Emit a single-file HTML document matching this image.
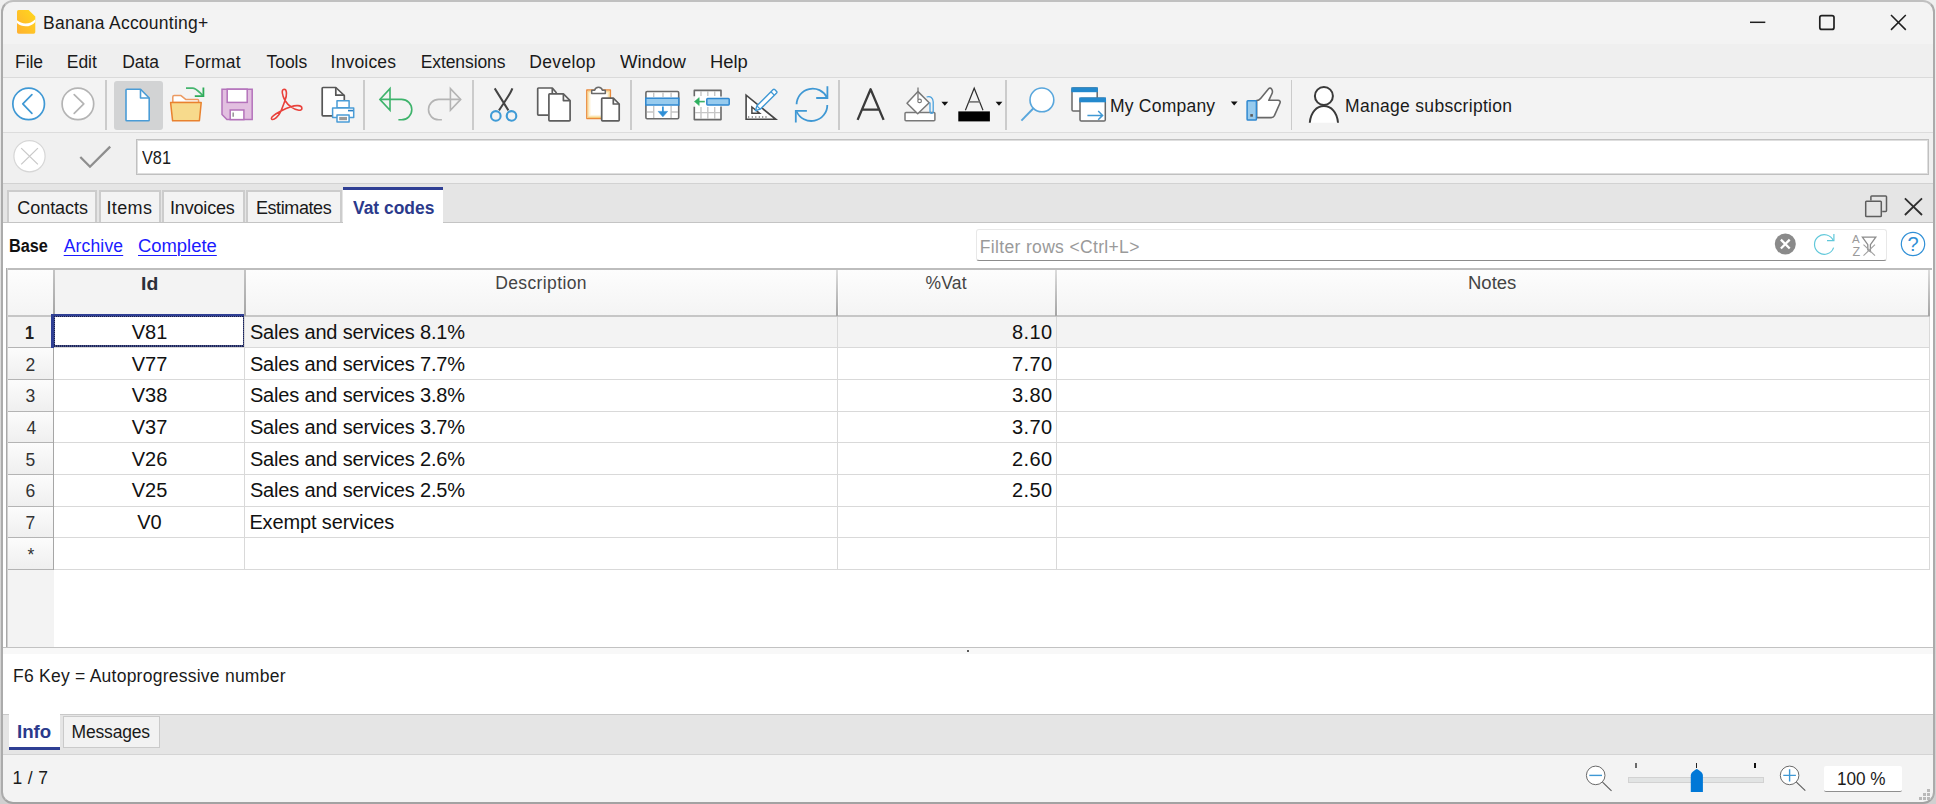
<!DOCTYPE html>
<html lang="en"><head><meta charset="utf-8"><title>Banana Accounting+</title>
<style>
html,body{margin:0;padding:0}
body{width:1936px;height:804px;overflow:hidden;position:relative;background:linear-gradient(#efefef,#d9d9d9 50%,#d0d0d0);font-family:'Liberation Sans',sans-serif}
.abs,.tx,svg.ic{position:absolute}
.tx{white-space:pre;line-height:1;font-family:'Liberation Sans',sans-serif}
#win{left:1px;top:0;width:1934px;height:804px;box-sizing:border-box;border:2px solid #ababab;border-top-color:#c0c0c0;border-bottom-color:#a2a2a2;border-radius:12px;background:#f3f3f3;overflow:hidden}
.hl{height:1px;left:3px;width:1930px}
.vsep{width:2px;top:80px;height:50px;background:#cbcbcb}
.tab{box-sizing:border-box;border:2px solid #cccccc;border-bottom:none;background:#f3f3f3;top:190px;height:32px}
.gl{background:#d9d9d9}
.rh{left:8px;width:45px;background:linear-gradient(#fcfcfc,#f0f0f0);border-bottom:1px solid #b4b4b4;box-sizing:border-box}

</style></head>
<body>
<div id="win" class="abs"></div>
<!-- bars -->
<div class="abs" style="left:3px;top:44px;width:1930px;height:33px;background:#efefef"></div>
<div class="abs hl" style="top:77px;background:#dadada"></div>
<div class="abs hl" style="top:132px;background:#dcdcdc"></div>
<div class="abs" style="left:3px;top:133px;width:1930px;height:50px;background:#f0f0f0"></div>
<div class="abs" style="left:3px;top:183px;width:1930px;height:40px;background:#e5e5e5"></div>
<div class="abs hl" style="top:183px;background:#d2d2d2"></div>
<!-- white main area -->
<div class="abs" style="left:3px;top:223px;width:1930px;height:491px;background:#fff"></div>
<div class="abs hl" style="top:222px;background:#c4c4c4"></div>
<!-- toolbar highlights/separators -->
<div class="abs" style="left:113.6px;top:80.5px;width:49.4px;height:49px;background:#d2d3d4;border-radius:3px"></div>
<div class="abs vsep" style="left:105px"></div>
<div class="abs vsep" style="left:363px"></div>
<div class="abs vsep" style="left:471.7px"></div>
<div class="abs vsep" style="left:630px"></div>
<div class="abs vsep" style="left:838px"></div>
<div class="abs vsep" style="left:1005.2px"></div>
<div class="abs vsep" style="left:1290.6px;width:1.8px"></div>
<!-- edit input -->
<div class="abs" style="left:135.7px;top:139px;width:1793.6px;height:35.8px;box-sizing:border-box;border:1px solid #c0c0c0;box-shadow:inset 0 0 0 1px #dedede;background:#fff"></div>
<!-- tabs -->
<div class="abs tab" style="left:7.4px;width:90px"></div>
<div class="abs tab" style="left:98.5px;width:62.4px"></div>
<div class="abs tab" style="left:161.8px;width:83px"></div>
<div class="abs tab" style="left:246.2px;width:95.8px"></div>
<div class="abs" style="left:343px;top:187px;width:100px;height:36px;background:#fff;border-top:3px solid #2f3f94;box-sizing:border-box"></div>
<!-- filter box -->
<div class="abs" style="left:976px;top:229px;width:911px;height:32px;box-sizing:border-box;border:1px solid #e8e8e8;border-bottom:1.5px solid #8c8c8c;border-radius:3px;background:#fff"></div>
<!-- table -->
<div class="abs" style="left:7px;top:268px;width:1925px;height:2px;background:#bdbdbd"></div>
<div class="abs" style="left:6px;top:268px;width:2px;height:379px;background:linear-gradient(90deg,#a8a8a8 50%,#cfcfcf 50%)"></div>
<div class="abs" style="left:8px;top:270px;width:1922px;height:45px;background:linear-gradient(#fdfdfd,#f4f4f4)"></div>
<div class="abs" style="left:54px;top:270px;width:190px;height:45px;background:#f3f3f3"></div>
<div class="abs" style="left:8px;top:315px;width:1922px;height:2px;background:#c6c6c6"></div>
<!-- row header column -->
<div class="abs" style="left:8px;top:317px;width:46px;height:330px;background:#f3f3f3"></div>
<!-- row 1 highlight -->
<div class="abs" style="left:54px;top:317px;width:1876px;height:30px;background:#f3f3f3"></div>
<div class="abs" style="left:8px;top:317px;width:45px;height:30px;background:#f3f3f3"></div>
<div class="abs" style="left:8px;top:347px;width:46px;height:1px;background:#b4b4b4"></div>
<div class="abs" style="left:8px;top:348px;width:45px;height:31px;background:linear-gradient(#fcfcfc,#efefef)"></div>
<div class="abs" style="left:8px;top:379px;width:46px;height:1px;background:#b4b4b4"></div>
<div class="abs" style="left:8px;top:380px;width:45px;height:31px;background:linear-gradient(#fcfcfc,#efefef)"></div>
<div class="abs" style="left:8px;top:411px;width:46px;height:1px;background:#b4b4b4"></div>
<div class="abs" style="left:8px;top:412px;width:45px;height:30px;background:linear-gradient(#fcfcfc,#efefef)"></div>
<div class="abs" style="left:8px;top:442px;width:46px;height:1px;background:#b4b4b4"></div>
<div class="abs" style="left:8px;top:443px;width:45px;height:31px;background:linear-gradient(#fcfcfc,#efefef)"></div>
<div class="abs" style="left:8px;top:474px;width:46px;height:1px;background:#b4b4b4"></div>
<div class="abs" style="left:8px;top:475px;width:45px;height:31px;background:linear-gradient(#fcfcfc,#efefef)"></div>
<div class="abs" style="left:8px;top:506px;width:46px;height:1px;background:#b4b4b4"></div>
<div class="abs" style="left:8px;top:507px;width:45px;height:30px;background:linear-gradient(#fcfcfc,#efefef)"></div>
<div class="abs" style="left:8px;top:537px;width:46px;height:1px;background:#b4b4b4"></div>
<div class="abs" style="left:8px;top:538px;width:45px;height:31px;background:linear-gradient(#fcfcfc,#efefef)"></div>
<div class="abs" style="left:8px;top:569px;width:46px;height:1px;background:#b4b4b4"></div>
<div class="abs gl" style="left:54px;top:347px;width:1876px;height:1px"></div>
<div class="abs gl" style="left:54px;top:379px;width:1876px;height:1px"></div>
<div class="abs gl" style="left:54px;top:411px;width:1876px;height:1px"></div>
<div class="abs gl" style="left:54px;top:442px;width:1876px;height:1px"></div>
<div class="abs gl" style="left:54px;top:474px;width:1876px;height:1px"></div>
<div class="abs gl" style="left:54px;top:506px;width:1876px;height:1px"></div>
<div class="abs gl" style="left:54px;top:537px;width:1876px;height:1px"></div>
<div class="abs gl" style="left:54px;top:569px;width:1876px;height:1px"></div>
<div class="abs" style="left:53.1px;top:270px;width:1.8px;height:46px;background:linear-gradient(#c4c4c4,#a4a4a4)"></div>
<div class="abs" style="left:244.1px;top:270px;width:1.8px;height:46px;background:linear-gradient(#c4c4c4,#a4a4a4)"></div>
<div class="abs" style="left:836.3px;top:270px;width:1.7px;height:46px;background:linear-gradient(#dcdcdc,#a4a4a4)"></div><div class="abs" style="left:838px;top:270px;width:1px;height:45px;background:#fff;opacity:.6"></div>
<div class="abs" style="left:1055.3px;top:270px;width:1.7px;height:46px;background:linear-gradient(#dcdcdc,#a4a4a4)"></div><div class="abs" style="left:1057px;top:270px;width:1px;height:45px;background:#fff;opacity:.6"></div>
<div class="abs" style="left:1928.3px;top:270px;width:1.7px;height:46px;background:linear-gradient(#dcdcdc,#a4a4a4)"></div><div class="abs" style="left:1930px;top:270px;width:1px;height:45px;background:#fff;opacity:.6"></div>
<div class="abs gl" style="left:244px;top:317px;width:1px;height:253px"></div>
<div class="abs gl" style="left:837px;top:317px;width:1px;height:253px"></div>
<div class="abs gl" style="left:1056px;top:317px;width:1px;height:253px"></div>
<div class="abs gl" style="left:1929px;top:317px;width:1px;height:253px"></div>
<div class="abs" style="left:53px;top:317px;width:1px;height:253px;background:#a6a6a6"></div>
<div class="abs" style="left:54px;top:316px;width:190px;height:31px;background:#fff"></div>
<div class="abs" style="left:51.4px;top:313.5px;width:192.8px;height:2.7px;background:#2f3f94"></div>
<div class="abs" style="left:51.4px;top:315px;width:2.9px;height:32.5px;background:#2f3f94"></div>
<div class="abs" style="left:54.3px;top:316.1px;width:189.7px;height:1px;background:repeating-linear-gradient(90deg,#141a4a 0 1px,#5b659a 1px 2px)"></div>
<div class="abs" style="left:54.3px;top:316.1px;width:1px;height:30.8px;background:repeating-linear-gradient(180deg,#141a4a 0 1px,#5b659a 1px 2px)"></div>
<div class="abs" style="left:54.3px;top:345.2px;width:189.7px;height:1.7px;background:repeating-linear-gradient(90deg,#1d2456 0 1px,#4a5488 1px 2px)"></div>
<div class="abs" style="left:242.5px;top:316.1px;width:1.5px;height:30.8px;background:repeating-linear-gradient(180deg,#1d2456 0 1px,#4a5488 1px 2px)"></div>
<div class="abs hl" style="top:647px;background:#c2c2c2"></div>
<div class="abs" style="left:3px;top:648px;width:1930px;height:6px;background:#f8f8f8"></div>
<div class="abs" style="left:967px;top:650px;width:2px;height:2px;background:#5a5a5a"></div>
<div class="abs" style="left:3px;top:714px;width:1930px;height:41px;background:#e5e5e5"></div>
<div class="abs hl" style="top:714px;background:#c9c9c9"></div>
<div class="abs hl" style="top:754px;background:#d4d4d4"></div>
<div class="abs" style="left:8.7px;top:714px;width:51.5px;height:36px;background:#fff;border-bottom:3px solid #2f3f94;box-sizing:border-box"></div>
<div class="abs" style="left:62.6px;top:716px;width:97.2px;height:31.6px;background:#f2f2f2;border:1.5px solid #cacaca;box-sizing:border-box"></div>
<div class="abs" style="left:1824px;top:766px;width:78px;height:25.6px;background:#fff;border-bottom:1px solid #8f8f8f;border-radius:2px;box-sizing:border-box"></div>
<div class="abs" style="left:1628px;top:777px;width:136px;height:6px;background:#e2e4e4;border:1px solid #d2d2d2;box-sizing:border-box"></div>
<div class="abs" style="left:1635px;top:763px;width:2px;height:5px;background:#6a6a6a"></div>
<div class="abs" style="left:1695.6px;top:763px;width:1.5px;height:5px;background:#222"></div>
<div class="abs" style="left:1754px;top:762.6px;width:2.2px;height:5.4px;background:#111"></div>

<svg class="abs" style="left:0;top:0" width="1936" height="804" viewBox="0 0 1936 804" fill="none" stroke-linecap="butt" stroke-linejoin="miter">
<defs>
<linearGradient id="lg" x1="0" y1="1" x2="1" y2="0"><stop offset="0" stop-color="#ffb030"/><stop offset="1" stop-color="#ffd81c"/></linearGradient>
<linearGradient id="clipg" x1="0" y1="0" x2="1" y2="0"><stop offset="0" stop-color="#f6c56a"/><stop offset="0.18" stop-color="#fff"/><stop offset="0.82" stop-color="#fff"/><stop offset="1" stop-color="#f6c56a"/></linearGradient>
</defs>
<!-- app logo -->
<g id="logo">
<path d="M18.6,10 H28.6 L35.3,16.4 V32 a1.7,1.7 0 0 1 -1.7,1.7 H18.7 a1.7,1.7 0 0 1 -1.7,-1.7 V11.6 a1.6,1.6 0 0 1 1.6,-1.6 Z" fill="url(#lg)"/>
<path d="M17,20.3 C22,24.7 30.5,24.5 35.3,19.2 V21.9 C30.5,27.6 22,27.6 17,23 Z" fill="#fff"/>
</g>
<!-- window controls -->
<g stroke="#1f1f1f" stroke-width="1.5">
<path d="M1750,22.3 H1765.3"/>
<rect x="1819.8" y="15.6" width="14.2" height="13.8" rx="2" stroke-width="1.7"/>
<path d="M1891,15 L1905.8,29.9 M1905.8,15 L1891,29.9"/>
</g>
<!-- back / forward -->
<g stroke-width="1.7" stroke-linecap="round" stroke-linejoin="round">
<circle cx="28.65" cy="103.9" r="15.8" fill="#fff" stroke="#3f98d4"/>
<path d="M31.9,94.6 L22.8,103.9 L31.9,113.3" stroke="#3f98d4"/>
<circle cx="77.9" cy="103.9" r="15.8" fill="#fff" stroke="#b4b4b4"/>
<path d="M74.2,94.6 L83.8,103.9 L74.2,113.3" stroke="#b4b4b4"/>
</g>
<!-- new document -->
<g stroke="#4a9cd6" stroke-width="1.6" stroke-linejoin="round">
<path d="M126.8,89.2 H140.5 L149.2,98 V119.9 a0.8,0.8 0 0 1 -0.8,0.8 H126.8 a0.8,0.8 0 0 1 -0.8,-0.8 V90 a0.8,0.8 0 0 1 0.8,-0.8 Z" fill="#fff"/>
<path d="M140.5,89.2 V98 H149.2"/>
</g>
<!-- open folder -->
<g stroke-linejoin="round">
<path d="M172.8,102.5 V97 a1.4,1.4 0 0 1 1.4,-1.4 H181 L186,99.6 H197.6 a1,1 0 0 1 1,1 V102.5 Z" fill="#fff" stroke="#ec9a62" stroke-width="1.5"/>
<path d="M170.6,102.6 H201.2 L199.4,120.8 H172.6 Z" fill="#f7da8c" stroke="#e9822f" stroke-width="1.5"/>
<path d="M186,88.1 H192.5 C196,88.1 197.5,90.5 202.6,95.4" stroke="#45b56e" stroke-width="1.8"/>
<path d="M203.4,87.6 V96.2 H194.8" stroke="#2dab58" stroke-width="1.8" stroke-linejoin="miter"/>
</g>
<!-- save -->
<g stroke="#b473bb" stroke-width="1.5" stroke-linejoin="miter">
<path d="M222,89.2 H252.2 V119.6 H226.9 L222,114.5 Z" fill="#e2bfe0"/>
<rect x="227.2" y="89.2" width="20" height="13.2" fill="#fff"/>
<rect x="230.2" y="110" width="13.7" height="9.6" fill="#fff"/>
<path d="M233.2,112.6 V116.8" stroke="#9a9a9a" stroke-width="1.6"/>
</g>
<!-- pdf -->
<path d="M285,100.5 C287,95.5 287.2,89.3 284.1,89.3 C281,89.3 282.2,95.5 285,100.5 C287,103.6 289,105.6 291,106.8 C295,109.6 301.9,111.9 301.9,108.4 C301.9,104.8 295,105.2 291,106.8 C287,108 284,109.4 281,111 C276,113.6 270,117.2 271.7,119.1 C273.6,121 279,116 281,111 C283,106 284,103.5 285,100.5 Z" stroke="#e9413b" stroke-width="1.6" stroke-linejoin="round"/>
<!-- print preview -->
<g stroke-linejoin="round">
<path d="M344.3,100 V95.5 L335.8,87.5 H323 a0.8,0.8 0 0 0 -0.8,0.8 V115.1 a0.8,0.8 0 0 0 0.8,0.8 H332" fill="#fff" stroke="#565656" stroke-width="1.7"/>
<path d="M335.8,87.5 V95.2 H344.3" stroke="#565656" stroke-width="1.7"/>
<rect x="337" y="100.7" width="12.1" height="7" fill="#fff" stroke="#4a9cd6" stroke-width="1.5"/>
<rect x="332.6" y="108.1" width="21.1" height="9.3" fill="#fff" stroke="#4a9cd6" stroke-width="1.5"/>
<rect x="337" y="114.9" width="12.1" height="7.2" fill="#fff" stroke="#4a9cd6" stroke-width="1.5"/>
<rect x="339.2" y="116.9" width="7.8" height="3.3" fill="#9a9a9a" stroke="none"/>
<path d="M348,110.6 H353" stroke="#2a80c6" stroke-width="1.6"/>
</g>
<!-- undo -->
<g stroke="#3db36b" stroke-width="1.6" stroke-linejoin="miter">
<path d="M390,88.6 L379.9,99.4 L390,110.2 Z"/>
<path d="M379.9,99.4 H401.6 A10.2,10.2 0 0 1 401.6,119.8 H398.4"/>
</g>
<!-- redo -->
<g stroke="#b4b4b4" stroke-width="1.6" stroke-linejoin="miter">
<path d="M450.4,88.6 L460.7,99.4 L450.4,110.2 Z"/>
<path d="M460.7,99.4 H438.7 A10.2,10.2 0 0 0 438.7,119.8 H441.9"/>
</g>
<!-- cut -->
<g>
<path d="M494.7,88.4 L508.4,110.4 M512.4,88.4 C511,93 505,101 499,110.4" stroke="#444" stroke-width="2"/>
<circle cx="495.8" cy="115.9" r="4.8" stroke="#3f9bd6" stroke-width="2.1"/>
<circle cx="511.5" cy="115.9" r="4.8" stroke="#3f9bd6" stroke-width="2.1"/>
</g>
<!-- copy -->
<g stroke="#5e5e5e" stroke-width="1.7" stroke-linejoin="round" fill="#fff">
<path d="M556.6,93 L552.3,88 H538.5 a0.8,0.8 0 0 0 -0.8,0.8 V114.3 a0.8,0.8 0 0 0 0.8,0.8 H548"/>
<path d="M552.3,88 V93"/>
<path d="M549.7,93.9 H563.4 L570.1,100.6 V120.1 a0.8,0.8 0 0 1 -0.8,0.8 H549.7 a0.8,0.8 0 0 1 -0.8,-0.8 V94.7 a0.8,0.8 0 0 1 0.8,-0.8 Z"/>
<path d="M563.4,93.9 V100.6 H570.1" fill="none"/>
</g>
<!-- paste -->
<g stroke-linejoin="round">
<rect x="586.8" y="90" width="23.6" height="28.6" fill="#fff" stroke="#ea8a3c" stroke-width="1.4"/>
<rect x="588" y="91.2" width="21.2" height="26.2" stroke="#f6cd7c" stroke-width="1.1"/>
<rect x="589" y="92.2" width="19.2" height="24.2" stroke="#fae3ae" stroke-width="1"/>
<rect x="590" y="93.2" width="17.2" height="22.2" stroke="#fdf3dc" stroke-width="1"/>
<path d="M591.7,93.5 V90.3 H594.6 A4,4 0 0 1 602.4,90.3 H605.3 V93.5 Z" fill="#fff" stroke="#6a6a6a" stroke-width="1.5"/>
<path d="M602.5,98.2 H613.3 L619.2,104 V120.1 a0.8,0.8 0 0 1 -0.8,0.8 H602.5 a0.8,0.8 0 0 1 -0.8,-0.8 V99 a0.8,0.8 0 0 1 0.8,-0.8 Z" fill="#fff" stroke="#5e5e5e" stroke-width="1.7"/>
<path d="M613.3,98.2 V104 H619.2" stroke="#5e5e5e" stroke-width="1.7"/>
</g>
<!-- insert row -->
<g>
<rect x="645.9" y="91.5" width="32.8" height="27.2" rx="1.2" fill="#fff" stroke="#6a6a6a" stroke-width="1.6"/>
<path d="M653.7,92.5 V97 M663,92.5 V97 M671.1,92.5 V97 M653.7,106 V118 M671.1,106 V118 M647,112 H653.7 M671.1,112 H678" stroke="#c6c6c6" stroke-width="1.4"/>
<rect x="645.8" y="98.2" width="33" height="6.8" fill="#97cbee" stroke="#2f88d0" stroke-width="1.5"/>
<path d="M662.9,106.6 V112" stroke="#2f8fd6" stroke-width="1.7"/>
<path d="M658.2,111.4 H667.6 L662.9,116.8 Z" fill="#2f8fd6" stroke="#2f8fd6" stroke-width="0.6"/>
</g>
<!-- delete row -->
<g>
<rect x="695.2" y="91.3" width="25" height="27.4" fill="#fff" stroke="none"/>
<path d="M701,91.5 V96 M707.8,91.5 V96 M714.7,91.5 V96 M701,107 V118.6 M707.8,107 V118.6 M714.7,107 V118.6 M695.2,112.6 H720.2" stroke="#c6c6c6" stroke-width="1.4"/>
<path d="M694.3,96.2 V90.4 H721 V96.5 M721,106.6 V119.6 H694.3 V106.7" fill="none" stroke="#6a6a6a" stroke-width="1.6" stroke-linejoin="round"/>
<rect x="706.8" y="98.4" width="22.4" height="6.5" rx="0.8" fill="#97cbee" stroke="#2f88d0" stroke-width="1.5"/>
<path d="M698.2,101.6 H704.8" stroke="#3db36b" stroke-width="1.6"/>
<path d="M699.2,97.6 L694.4,101.6 L699.2,105.6 Z" fill="#2fb060" stroke="#2fb060" stroke-width="0.5"/>
</g>
<!-- ruler + pencil -->
<g>
<path d="M746.1,95.2 V119.3 H775.8 Z" fill="#fff" stroke="#464646" stroke-width="1.6" stroke-linejoin="miter" stroke-miterlimit="10"/>
<path d="M751.9,107 V113.2 H759.6 Z" stroke="#464646" stroke-width="1.5"/>
<path d="M748.7,116 V118 M752.3,116 V118 M755.8,116 V118 M759.3,116 V118 M762.7,116 V118 M766,116 V118" stroke="#8c8c8c" stroke-width="1.1"/>
<path d="M755.4,110.7 L756.9,105.84 L773.2,89.5 a1.1,1.1 0 0 1 1.5,0 L776.6,91.4 a1.1,1.1 0 0 1 0,1.5 L760.24,109.16 Z" fill="#fff" stroke="#3f98d4" stroke-width="1.4" stroke-linejoin="round"/>
<path d="M770.91,91.78 L774.25,95.1 M756.9,105.84 L760.24,109.16" stroke="#3f98d4" stroke-width="1.3"/>
</g>
<!-- refresh -->
<g stroke="#3f98d4" stroke-width="1.8">
<path d="M796.6,104.3 A16.05,16.05 0 0 1 827,97.5"/>
<path d="M827.4,86.2 V98 H816.2"/>
<path d="M827.3,104.9 A16.05,16.05 0 0 1 796.6,111.5"/>
<path d="M795.8,122.6 V110.8 H806.9"/>
</g>
<!-- big A -->
<path d="M857.6,119.9 L870.6,89.3 L883.6,119.9 M862.6,109.6 H878.8" stroke="#3a3a3a" stroke-width="2.3" stroke-linejoin="round"/>
<!-- fill bucket -->
<g>
<rect x="905" y="112.4" width="29.9" height="8.3" rx="1" fill="#fff" stroke="#787878" stroke-width="1.5"/>
<path d="M918,91.6 L929.2,102.8 L917.7,113.8 L907,103.2 Z" fill="#fff" stroke="#787878" stroke-width="1.5" stroke-linejoin="round"/>
<path d="M918,87.5 V99.4" stroke="#787878" stroke-width="1.3"/>
<circle cx="919.6" cy="100.9" r="1.8" stroke="#787878" stroke-width="1.2"/>
<path d="M926.6,97 C930.5,95.5 933.2,98 933.2,102 V111 C933.2,114 930,114 930,111 V102.5" stroke="#4aa0dc" stroke-width="1.3" fill="none"/>
</g>
<path d="M941.4,101.8 H948.2 L944.8,105.8 Z" fill="#111"/>
<!-- font color A -->
<g>
<path d="M965.4,110.2 L974.2,88.2 L983,110.2" stroke="#2e2e2e" stroke-width="1.2"/>
<path d="M968.4,101.9 H980" stroke="#6a6a6a" stroke-width="1.5"/>
<rect x="958.3" y="111.4" width="31.6" height="10" fill="#000"/>
</g>
<path d="M995.6,101.8 H1002.4 L999,105.8 Z" fill="#111"/>
<!-- search -->
<g stroke="#58a6dc">
<circle cx="1041.9" cy="99.9" r="11.9" fill="#fff" stroke-width="1.6"/>
<path d="M1033.2,108.5 L1021.4,120.6" stroke-width="1.9"/>
</g>
<!-- windows -->
<g>
<rect x="1072" y="88" width="25.2" height="23" rx="1.3" fill="#fff" stroke="#686868" stroke-width="1.5"/>
<rect x="1071.3" y="87.3" width="26.6" height="4.9" fill="#2489cd"/>
<rect x="1080" y="98.2" width="25.3" height="22.9" rx="1.3" fill="#fff" stroke="#686868" stroke-width="1.5"/>
<rect x="1079.3" y="97.4" width="26.7" height="4.9" fill="#2489cd"/>
<path d="M1087.4,115.4 H1102.2 M1098.2,111 L1102.6,115.4 L1098.2,119.8" stroke="#3f98d4" stroke-width="1.5"/>
</g>
<path d="M1230.8,101.4 H1237.6 L1234.2,105.6 Z" fill="#111"/>
<!-- thumb up -->
<g>
<path d="M1256.6,100.6 C1258.6,100.4 1259.6,99.6 1260.6,98.4 L1268.6,88.8 C1269.6,87.6 1271,88 1271.8,89.4 C1272.8,91.2 1272.6,92.6 1271.8,94 L1268.8,100.3 H1278 C1280,100.3 1280.6,101.6 1279.9,103.2 L1274.4,115.6 C1273.6,117.2 1272.8,117.6 1271.2,117.6 H1256.6 Z" fill="#fff" stroke="#686868" stroke-width="1.6" stroke-linejoin="round"/>
<rect x="1247.1" y="100.7" width="9.3" height="19.3" rx="0.8" fill="#97cbee" stroke="#2f88d0" stroke-width="1.5"/>
<rect x="1250.3" y="114.1" width="2.6" height="2.6" fill="#5a5a5a"/>
</g>
<!-- person -->
<g stroke="#3a3a3a" stroke-width="2">
<path d="M1309.8,122.8 C1310.6,112 1317,106.1 1323.9,106.1 C1330.8,106.1 1337.2,112 1338,122.8" fill="#fff"/>
<circle cx="1323.9" cy="96" r="9" fill="#fff"/>
</g>
<!-- cancel / accept -->
<g>
<circle cx="29.5" cy="156.2" r="15.6" fill="#fff" stroke="#d6d6d6" stroke-width="1.2"/>
<path d="M21.2,148.1 L37.9,164.4 M37.9,148.1 L21.2,164.4" stroke="#c9c9c9" stroke-width="1.3"/>
<path d="M80.3,157 L90,166.7 L110.2,146.6" stroke="#8e8e8e" stroke-width="2.3"/>
</g>
<!-- tabbar restore / close -->
<g stroke="#5e5e5e" stroke-width="1.5">
<path d="M1870.9,200.4 V196.7 a0.8,0.8 0 0 1 0.8,-0.8 H1885.7 a0.8,0.8 0 0 1 0.8,0.8 V210.6 a0.8,0.8 0 0 1 -0.8,0.8 H1882.2"/>
<rect x="1865.7" y="201.2" width="15.6" height="15.4" rx="0.8"/>
</g>
<path d="M1904.9,198.3 L1922,215 M1922,198.3 L1904.9,215" stroke="#2e2e2e" stroke-width="1.8"/>
<!-- filter icons -->
<circle cx="1785.3" cy="244" r="10.5" fill="#8a8a8a"/>
<path d="M1780.9,239.6 L1789.7,248.5 M1789.7,239.6 L1780.9,248.5" stroke="#fff" stroke-width="2.3"/>
<g stroke="#60c8da" stroke-width="1.2">
<path d="M1833.4,240.8 A9.8,9.8 0 1 0 1833.6,247.6"/>
<path d="M1833.9,234.1 V240.7 H1827"/>
</g>
<g stroke="#a0a0a0" stroke-width="1.1">
<path d="M1862.4,237.1 H1875.8 L1870.4,244.6 V251.6 L1867.8,250 V244.6 Z" stroke="#8c8c8c" stroke-width="1.3"/>
<path d="M1863.5,244.6 L1875,255.6 M1875,244.6 L1863.5,255.6"/>
</g>
<text x="1852" y="242.6" font-family="'Liberation Sans',sans-serif" font-size="11.5" fill="#9a9a9a" stroke="none">A</text>
<text x="1852.4" y="255.7" font-family="'Liberation Sans',sans-serif" font-size="12.5" fill="#9a9a9a" stroke="none">Z</text>
<circle cx="1913" cy="244" r="11.7" stroke="#2f8fd6" stroke-width="1.2" fill="#fff"/>
<text x="1913" y="251.4" text-anchor="middle" font-family="'Liberation Sans',sans-serif" font-size="20" fill="#2f8fd6" stroke="none">?</text>
<!-- zoom controls -->
<g>
<circle cx="1595.7" cy="775.4" r="9.3" fill="#fff" stroke="#6a6a6a" stroke-width="1"/>
<path d="M1589.3,775.4 H1602" stroke="#3f98d4" stroke-width="1.4"/>
<path d="M1602.5,782.2 L1611.5,790.9" stroke="#5a5a5a" stroke-width="1.1"/>
<circle cx="1789.6" cy="775.4" r="9.3" fill="#fff" stroke="#6a6a6a" stroke-width="1"/>
<path d="M1783.3,775.4 H1795.9 M1789.6,769.2 V781.6" stroke="#3f98d4" stroke-width="1.4"/>
<path d="M1796.4,782.2 L1805.3,790.7" stroke="#5a5a5a" stroke-width="1.1"/>
<path d="M1690.8,792 V775.4 C1690.8,772.6 1694,770.6 1696.8,769 C1699.6,770.6 1702.9,772.6 1702.9,775.4 V792 Z" fill="#0078d7"/>
</g>
<!-- size grip -->
<g fill="#b9b9b9">
<rect x="1927" y="789" width="3" height="3"/>
<rect x="1923" y="793" width="3" height="3"/><rect x="1927" y="793" width="3" height="3"/>
<rect x="1919" y="797" width="3" height="3"/><rect x="1923" y="797" width="3" height="3"/><rect x="1927" y="797" width="3" height="3"/>
</g>
</svg>

<!-- text -->
<span class="tx" id="title" style="left:43.00px;top:15.00px;font-size:17.5px;font-weight:400;color:#1a1a1a;letter-spacing:0.247px;">Banana Accounting+</span>
<span class="tx" id="m0" style="left:15.10px;top:54.00px;font-size:17.5px;font-weight:400;color:#1a1a1a;letter-spacing:-0.133px;">File</span>
<span class="tx" id="m1" style="left:66.80px;top:54.00px;font-size:17.5px;font-weight:400;color:#1a1a1a;letter-spacing:-0.066px;">Edit</span>
<span class="tx" id="m2" style="left:122.30px;top:54.00px;font-size:17.5px;font-weight:400;color:#1a1a1a;letter-spacing:-0.134px;">Data</span>
<span class="tx" id="m3" style="left:184.30px;top:54.00px;font-size:17.5px;font-weight:400;color:#1a1a1a;letter-spacing:0.160px;">Format</span>
<span class="tx" id="m4" style="left:266.50px;top:54.00px;font-size:17.5px;font-weight:400;color:#1a1a1a;letter-spacing:-0.050px;">Tools</span>
<span class="tx" id="m5" style="left:330.60px;top:54.00px;font-size:17.5px;font-weight:400;color:#1a1a1a;letter-spacing:0.171px;">Invoices</span>
<span class="tx" id="m6" style="left:420.70px;top:54.00px;font-size:17.5px;font-weight:400;color:#1a1a1a;letter-spacing:-0.089px;">Extensions</span>
<span class="tx" id="m7" style="left:529.20px;top:54.00px;font-size:17.5px;font-weight:400;color:#1a1a1a;letter-spacing:0.367px;">Develop</span>
<span class="tx" id="m8" style="left:620.00px;top:54.00px;font-size:17.5px;font-weight:400;color:#1a1a1a;letter-spacing:0.000px;transform:scaleX(1.0597);transform-origin:0 0;">Window</span>
<span class="tx" id="m9" style="left:710.35px;top:54.00px;font-size:17.5px;font-weight:400;color:#1a1a1a;letter-spacing:0.000px;transform:scaleX(1.0500);transform-origin:0 0;">Help</span>
<span class="tx" id="myco" style="left:1110.00px;top:98.00px;font-size:17.5px;font-weight:400;color:#1a1a1a;letter-spacing:0.222px;">My Company</span>
<span class="tx" id="msub" style="left:1345.00px;top:98.00px;font-size:17.5px;font-weight:400;color:#1a1a1a;letter-spacing:0.311px;">Manage subscription</span>
<span class="tx" id="edit" style="left:141.70px;top:148.00px;font-size:19px;font-weight:400;color:#1a1a1a;letter-spacing:0.000px;transform:scaleX(0.8576);transform-origin:0 0;">V81</span>
<span class="tx" id="tab0" style="left:17.30px;top:199.00px;font-size:18px;font-weight:400;color:#1a1a1a;letter-spacing:-0.057px;">Contacts</span>
<span class="tx" id="tab1" style="left:106.50px;top:199.00px;font-size:18px;font-weight:400;color:#1a1a1a;letter-spacing:0.350px;">Items</span>
<span class="tx" id="tab2" style="left:170.00px;top:199.00px;font-size:18px;font-weight:400;color:#1a1a1a;letter-spacing:-0.171px;">Invoices</span>
<span class="tx" id="tab3" style="left:255.90px;top:199.00px;font-size:18px;font-weight:400;color:#1a1a1a;letter-spacing:-0.400px;">Estimates</span>
<span class="tx" id="tab4" style="left:353.00px;top:199.00px;font-size:18px;font-weight:700;color:#2b3a8c;letter-spacing:0.000px;transform:scaleX(0.9687);transform-origin:0 0;">Vat codes</span>
<span class="tx" id="base" style="left:8.97px;top:238.00px;font-size:17.5px;font-weight:700;color:#111;letter-spacing:0.000px;transform:scaleX(0.9300);transform-origin:0 0;">Base</span>
<span class="tx" id="arch" style="left:63.70px;top:238.00px;font-size:17.5px;font-weight:400;color:#1a1aff;letter-spacing:0.166px;text-decoration:underline;text-decoration-thickness:1px;text-underline-offset:2.5px;">Archive</span>
<span class="tx" id="comp" style="left:137.85px;top:238.00px;font-size:17.5px;font-weight:400;color:#1a1aff;letter-spacing:0.000px;text-decoration:underline;text-decoration-thickness:1px;text-underline-offset:2.5px;transform:scaleX(1.0521);transform-origin:0 0;">Complete</span>
<span class="tx" id="filt" style="left:979.80px;top:239.00px;font-size:17.5px;font-weight:400;color:#9a9a9a;letter-spacing:0.337px;">Filter rows &lt;Ctrl+L&gt;</span>
<span class="tx" id="hid" style="left:140.69px;top:276.00px;font-size:17.5px;font-weight:700;color:#2a2f3a;letter-spacing:0.000px;transform:scaleX(1.1077);transform-origin:0 0;">Id</span>
<span class="tx" id="hdesc" style="left:495.20px;top:275.00px;font-size:17.5px;font-weight:400;color:#444;letter-spacing:0.380px;">Description</span>
<span class="tx" id="hvat" style="left:925.60px;top:275.00px;font-size:17.5px;font-weight:400;color:#444;letter-spacing:0.133px;">%Vat</span>
<span class="tx" id="hnotes" style="left:1468.44px;top:275.00px;font-size:17.5px;font-weight:400;color:#444;letter-spacing:0.000px;transform:scaleX(1.0568);transform-origin:0 0;">Notes</span>
<span class="tx" id="info" style="left:13.00px;top:668.00px;font-size:17.5px;font-weight:400;color:#1a1a1a;letter-spacing:0.247px;">F6 Key = Autoprogressive number</span>
<span class="tx" id="tinfo" style="left:17.33px;top:724.00px;font-size:17.5px;font-weight:700;color:#2b3a8c;letter-spacing:0.000px;transform:scaleX(1.0677);transform-origin:0 0;">Info</span>
<span class="tx" id="tmsg" style="left:71.50px;top:724.00px;font-size:17.5px;font-weight:400;color:#1a1a1a;letter-spacing:-0.171px;">Messages</span>
<span class="tx" id="stat" style="left:12.40px;top:770.00px;font-size:17.5px;font-weight:400;color:#1a1a1a;letter-spacing:0.400px;">1 / 7</span>
<span class="tx" id="zoom" style="left:1836.75px;top:770.00px;font-size:18px;font-weight:400;color:#1a1a1a;letter-spacing:0.000px;transform:scaleX(0.9520);transform-origin:0 0;">100 %</span>
<span class="tx" id="r1" style="left:24.98px;top:325.00px;font-size:17.5px;font-weight:700;color:#222;letter-spacing:0.000px;transform:scaleX(0.9250);transform-origin:0 0;">1</span>
<span class="tx" id="r2" style="left:25.50px;top:357.00px;font-size:17.5px;font-weight:400;color:#333;letter-spacing:0.000px;">2</span>
<span class="tx" id="r3" style="left:25.50px;top:388.00px;font-size:17.5px;font-weight:400;color:#333;letter-spacing:0.000px;">3</span>
<span class="tx" id="r4" style="left:26.50px;top:420.00px;font-size:17.5px;font-weight:400;color:#333;letter-spacing:0.000px;">4</span>
<span class="tx" id="r5" style="left:25.50px;top:452.00px;font-size:17.5px;font-weight:400;color:#333;letter-spacing:0.000px;">5</span>
<span class="tx" id="r6" style="left:25.50px;top:483.00px;font-size:17.5px;font-weight:400;color:#333;letter-spacing:0.000px;">6</span>
<span class="tx" id="r7" style="left:25.50px;top:515.00px;font-size:17.5px;font-weight:400;color:#333;letter-spacing:0.000px;">7</span>
<span class="tx" id="r8" style="left:27.60px;top:547.00px;font-size:17.5px;font-weight:400;color:#333;letter-spacing:0.000px;">*</span>
<span class="tx" id="id0" style="left:131.70px;top:322.00px;font-size:20px;font-weight:400;color:#111;letter-spacing:0.000px;">V81</span>
<span class="tx" id="d0" style="left:249.90px;top:322.00px;font-size:20px;font-weight:400;color:#111;letter-spacing:-0.173px;">Sales and services 8.1%</span>
<span class="tx" id="id1" style="left:131.70px;top:354.00px;font-size:20px;font-weight:400;color:#111;letter-spacing:0.000px;">V77</span>
<span class="tx" id="d1" style="left:249.90px;top:354.00px;font-size:20px;font-weight:400;color:#111;letter-spacing:-0.173px;">Sales and services 7.7%</span>
<span class="tx" id="id2" style="left:131.70px;top:385.00px;font-size:20px;font-weight:400;color:#111;letter-spacing:0.000px;">V38</span>
<span class="tx" id="d2" style="left:249.90px;top:385.00px;font-size:20px;font-weight:400;color:#111;letter-spacing:-0.173px;">Sales and services 3.8%</span>
<span class="tx" id="id3" style="left:131.70px;top:417.00px;font-size:20px;font-weight:400;color:#111;letter-spacing:0.000px;">V37</span>
<span class="tx" id="d3" style="left:249.90px;top:417.00px;font-size:20px;font-weight:400;color:#111;letter-spacing:-0.173px;">Sales and services 3.7%</span>
<span class="tx" id="id4" style="left:131.70px;top:449.00px;font-size:20px;font-weight:400;color:#111;letter-spacing:0.000px;">V26</span>
<span class="tx" id="d4" style="left:249.90px;top:449.00px;font-size:20px;font-weight:400;color:#111;letter-spacing:-0.173px;">Sales and services 2.6%</span>
<span class="tx" id="id5" style="left:131.70px;top:480.00px;font-size:20px;font-weight:400;color:#111;letter-spacing:0.000px;">V25</span>
<span class="tx" id="d5" style="left:249.90px;top:480.00px;font-size:20px;font-weight:400;color:#111;letter-spacing:-0.173px;">Sales and services 2.5%</span>
<span class="tx" id="id6" style="left:137.20px;top:512.00px;font-size:20px;font-weight:400;color:#111;letter-spacing:0.000px;">V0</span>
<span class="tx" id="d6" style="left:249.40px;top:512.00px;font-size:20px;font-weight:400;color:#111;letter-spacing:-0.129px;">Exempt services</span>
<span class="tx" id="v0" style="left:1012.00px;top:322.00px;font-size:20px;font-weight:400;color:#111;letter-spacing:0.367px;">8.10</span>
<span class="tx" id="v1" style="left:1012.00px;top:354.00px;font-size:20px;font-weight:400;color:#111;letter-spacing:0.367px;">7.70</span>
<span class="tx" id="v2" style="left:1012.00px;top:385.00px;font-size:20px;font-weight:400;color:#111;letter-spacing:0.367px;">3.80</span>
<span class="tx" id="v3" style="left:1012.00px;top:417.00px;font-size:20px;font-weight:400;color:#111;letter-spacing:0.367px;">3.70</span>
<span class="tx" id="v4" style="left:1012.00px;top:449.00px;font-size:20px;font-weight:400;color:#111;letter-spacing:0.367px;">2.60</span>
<span class="tx" id="v5" style="left:1012.00px;top:480.00px;font-size:20px;font-weight:400;color:#111;letter-spacing:0.367px;">2.50</span>
</body></html>
